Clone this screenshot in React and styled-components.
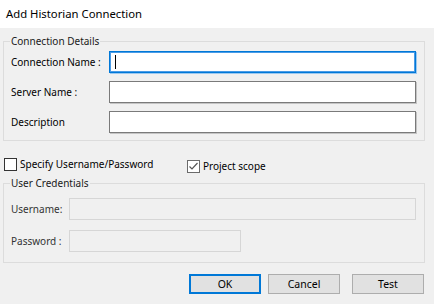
import React from "react";
import styled, { createGlobalStyle } from "styled-components";

const GlobalStyle = createGlobalStyle`
  html, body {
    margin: 0;
    padding: 0;
    background: #f0f0f0;
  }
  body {
    font-family: "Noto Sans", "Open Sans", sans-serif;
    font-size: 10px;
    line-height: 16px;
    color: #000;
  }
`;

const Dialog = styled.div`
  width: 434px;
  height: 304px;
  display: flex;
  flex-direction: column;
  background: #f0f0f0;
  overflow: hidden;
`;

const TitleBar = styled.div`
  height: 28px;
  flex: none;
  background: #fff;
  display: flex;
  align-items: center;
  padding-left: 6px;
  font-size: 11.3px;
  color: #000;
`;

const Body = styled.div`
  display: flex;
  flex-direction: column;
  padding: 5px 9px 0 3px;
`;

const Group = styled.fieldset`
  margin: 0;
  border: 1px solid #dcdcdc;
  padding: ${({ $top }) => $top}px 8px ${({ $bottom }) => $bottom}px 7px;
  display: flex;
  flex-direction: column;
  gap: ${({ $gap }) => $gap}px;
`;

const Legend = styled.legend`
  padding: 0 1px;
  margin-left: -1px;
  line-height: 16px;
  color: #1a1a1a;
  white-space: nowrap;
`;

const Row = styled.div`
  display: flex;
  align-items: center;
`;

const Label = styled.label`
  width: ${({ $w }) => $w}px;
  flex: none;
  white-space: nowrap;
  color: ${({ $muted }) => ($muted ? "#333" : "#000")};
`;

const Input = styled.div`
  box-sizing: border-box;
  height: 22px;
  width: ${({ $w }) => ($w ? `${$w}px` : "auto")};
  flex: ${({ $w }) => ($w ? "none" : "1")};
  background: #fff;
  border: 1px solid #7a7a7a;
  box-shadow: 1px 1px 0 #c4c4c4;
  position: relative;

  ${({ $focus }) =>
    $focus &&
    `
    border-color: #0078d7;
    box-shadow: inset 0 0 0 1px #4a9be6, 1px 1px 0 #9cc8f0;
  `}

  ${({ $disabled }) =>
    $disabled &&
    `
    background: #f0f0f0;
    border-color: #d6d6d6;
    box-shadow: none;
  `}
`;

const Caret = styled.span`
  position: absolute;
  left: 5px;
  top: 3px;
  width: 1px;
  height: 14px;
  background: #000;
`;

const CheckRow = styled.div`
  display: flex;
  align-items: flex-start;
  height: 16px;
  margin: 15px 0 3px 1px;
  white-space: nowrap;
`;

const Check = styled.label`
  display: flex;
  align-items: center;
  gap: 3px;
  width: ${({ $w }) => ($w ? `${$w}px` : "auto")};
  margin-top: ${({ $dy }) => $dy || 0}px;
`;

const Box = styled.span`
  box-sizing: border-box;
  width: 13px;
  height: 13px;
  border: 1px solid ${({ $checked }) => ($checked ? "#6b6b6b" : "#333")};
  background: #fff;
  display: flex;
  align-items: center;
  justify-content: center;
`;

const Buttons = styled.div`
  display: flex;
  justify-content: flex-end;
  margin-top: 11px;
  margin-right: 1px;
`;

const Button = styled.button`
  box-sizing: border-box;
  width: 72px;
  height: 20px;
  margin-left: ${({ $gap }) => $gap}px;
  padding: 0;
  font: inherit;
  font-size: 10.5px;
  color: #000;
  background: #e1e1e1;
  border: 1px solid ${({ $default }) => ($default ? "#0078d7" : "#adadad")};
  box-shadow: ${({ $default }) => ($default ? "inset 0 0 0 1px #0078d7" : "none")};
`;

const Checkbox = ({ checked, children, w, dy }) => (
  <Check $w={w} $dy={dy}>
    <Box $checked={checked}>
      {checked && (
        <svg width="11" height="11" viewBox="0 0 11 11">
          <path d="M1.5 5.5 L4 8 L9.5 2" fill="none" stroke="#555" strokeWidth="1.2" />
        </svg>
      )}
    </Box>
    {children}
  </Check>
);

export default function App() {
  return (
    <Dialog>
      <GlobalStyle />
      <TitleBar>Add Historian Connection</TitleBar>
      <Body>
        <Group $top={2} $gap={8} $bottom={7}>
          <Legend>Connection Details</Legend>
          <Row>
            <Label $w={98}>Connection Name :</Label>
            <Input $focus>
              <Caret />
            </Input>
          </Row>
          <Row>
            <Label $w={98}>Server Name :</Label>
            <Input />
          </Row>
          <Row>
            <Label $w={98}>Description</Label>
            <Input />
          </Row>
        </Group>

        <CheckRow>
          <Checkbox w={183}>Specify Username/Password</Checkbox>
          <Checkbox checked dy={2}>
            Project scope
          </Checkbox>
        </CheckRow>

        <Group $top={7} $gap={10} $bottom={10}>
          <Legend>User Credentials</Legend>
          <Row>
            <Label $w={58} $muted>
              Username:
            </Label>
            <Input $disabled />
          </Row>
          <Row>
            <Label $w={58} $muted>
              Password :
            </Label>
            <Input $disabled $w={172} />
          </Row>
        </Group>

        <Buttons>
          <Button $default>OK</Button>
          <Button $gap={7}>Cancel</Button>
          <Button $gap={12}>Test</Button>
        </Buttons>
      </Body>
    </Dialog>
  );
}
